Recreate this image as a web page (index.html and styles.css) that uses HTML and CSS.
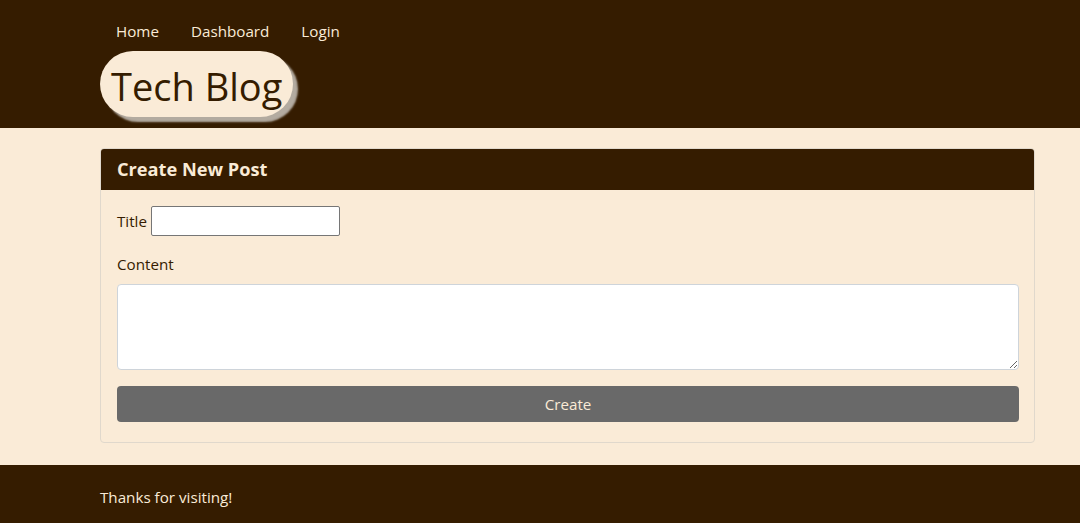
FILE: index.html
```html
<!DOCTYPE html>
<html lang="en">
<head>
<meta charset="utf-8">
<title>Tech Blog</title>
<link rel="stylesheet" href="styles.css">
</head>
<body>
<header class="site-header">
  <nav class="nav">
    <a class="nav-link" href="#">Home</a>
    <a class="nav-link" href="#">Dashboard</a>
    <a class="nav-link" href="#">Login</a>
  </nav>
  <h1 class="brand">Tech Blog</h1>
</header>
<main class="main">
  <section class="card">
    <h2 class="card-header">Create New Post</h2>
    <form class="card-body">
      <div class="title-row">
        <label class="label" for="title">Title</label>
        <input class="title-input" id="title" type="text">
      </div>
      <label class="label content-label" for="content">Content</label>
      <textarea class="content-input" id="content"></textarea>
      <button class="btn" type="button">Create</button>
    </form>
  </section>
</main>
<footer class="site-footer">Thanks for visiting!</footer>
</body>
</html>
```

FILE: styles.css
```css
* { box-sizing: border-box; }
html, body {
  margin: 0;
  padding: 0;
}
body {
  font-family: "Open Sans", "Noto Sans", sans-serif;
  font-size: 15.2px;
  line-height: 24px;
  background: #faebd7;
  color: #351c00;
}
.site-header {
  background: #351c00;
  padding: 11px 45px 11px 100px;
}
.nav {
  display: flex;
}
.nav-link {
  color: #faebd7;
  text-decoration: none;
  padding: 8px 16px;
  font-size: 15.2px;
  line-height: 24px;
}
.brand {
  display: block;
  width: fit-content;
  margin: 0;
  background: #faebd7;
  color: #351c00;
  font-size: 38px;
  font-weight: 400;
  line-height: 62px;
  height: 66px;
  padding: 4px 11px 0;
  border-radius: 33px;
  box-shadow: 5px 5px 2px #b3aba0;
}
.main {
  padding: 20px 45px 22px 100px;
}
.card {
  border: 1px solid #e0d8cc;
  border-radius: 4px;
  overflow: hidden;
}
.card-header {
  margin: 0;
  background: #351c00;
  color: #faebd7;
  font-size: 18.2px;
  font-weight: 700;
  line-height: 24px;
  padding: 8px 16px;
  height: 41px;
}
.card-body {
  padding: 16px 15px 20px 16px;
  display: flex;
  flex-direction: column;
}
.title-row {
  display: flex;
  align-items: center;
  gap: 4px;
  margin-bottom: 16px;
}
.label {
  font-size: 15.2px;
  line-height: 24px;
  color: #351c00;
}
.title-input {
  width: 189px;
  height: 30px;
  border: 1px solid #767676;
  border-radius: 2px;
  background: #fff;
  padding: 2px 4px;
}
.content-label {
  margin-bottom: 8px;
}
.content-input {
  height: 86px;
  width: 100%;
  border: 1px solid #ced4da;
  border-radius: 4px;
  background: #fff;
  margin-bottom: 16px;
  resize: vertical;
}
.btn {
  height: 36px;
  width: 100%;
  border: none;
  border-radius: 4px;
  background: #696969;
  color: #faebd7;
  font-family: inherit;
  font-size: 15.2px;
}
.site-footer {
  background: #351c00;
  color: #faebd7;
  padding: 20px 100px 14px;
  line-height: 24px;
  height: 58px;
}
```
